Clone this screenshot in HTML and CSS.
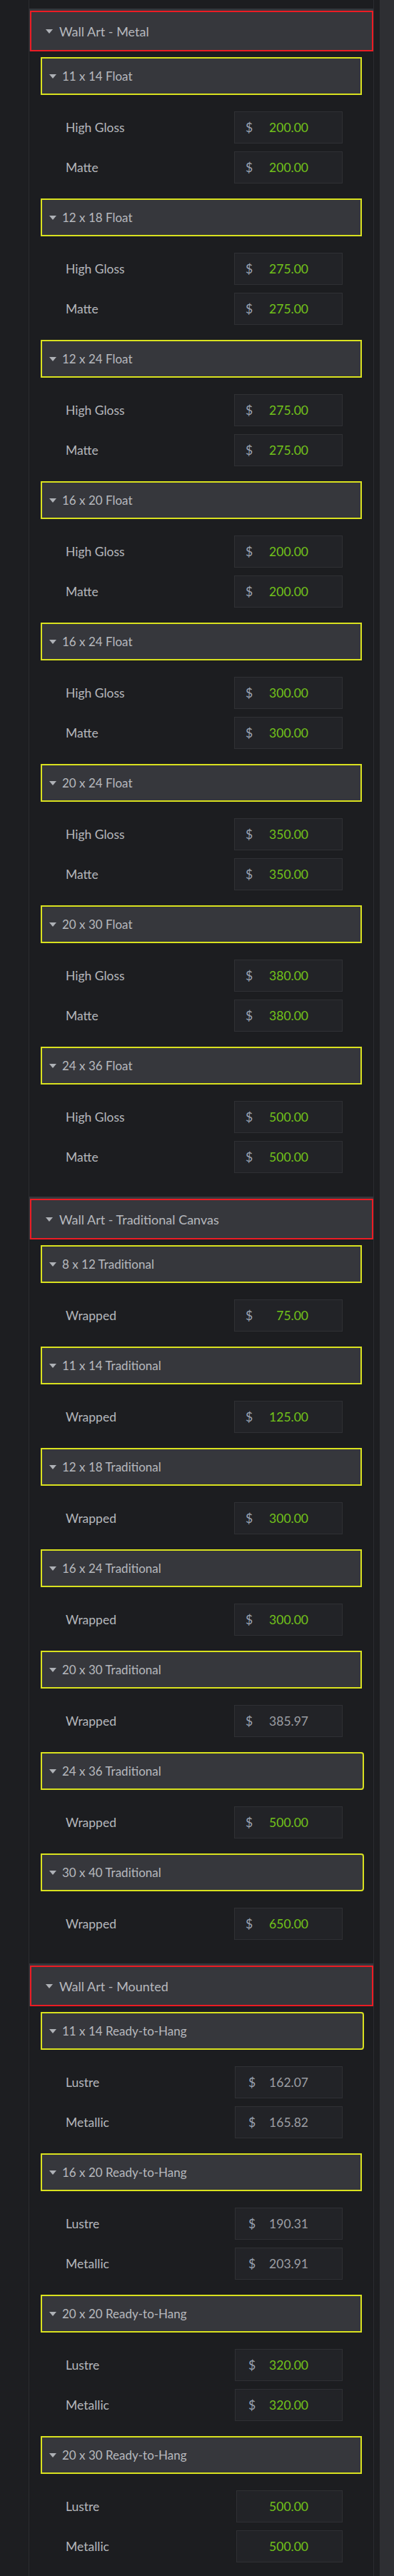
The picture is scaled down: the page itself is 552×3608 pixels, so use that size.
FILE: index.html
```html
<!DOCTYPE html>
<html lang="en">
<head>
<meta charset="utf-8">
<title>Wall Art Pricing</title>
<link rel="stylesheet" href="styles.css">
</head>
<body>
<div class="page">
  <div class="gutter"></div>
  <main class="panel">

    <section class="section">
      <div class="sec-head"><div class="sec-box"><span class="tri"></span><span>Wall Art - Metal</span></div></div>
      <div class="sec-body">
        <div class="group">
          <div class="sub"><span class="tri"></span><span>11 x 14 Float</span></div>
          <div class="rows">
            <div class="row"><span class="label">High Gloss</span><div class="field"><span class="cur">$</span><span class="val">200.00</span></div></div>
            <div class="row"><span class="label">Matte</span><div class="field"><span class="cur">$</span><span class="val">200.00</span></div></div>
          </div>
        </div>
        <div class="group">
          <div class="sub"><span class="tri"></span><span>12 x 18 Float</span></div>
          <div class="rows">
            <div class="row"><span class="label">High Gloss</span><div class="field"><span class="cur">$</span><span class="val">275.00</span></div></div>
            <div class="row"><span class="label">Matte</span><div class="field"><span class="cur">$</span><span class="val">275.00</span></div></div>
          </div>
        </div>
        <div class="group">
          <div class="sub"><span class="tri"></span><span>12 x 24 Float</span></div>
          <div class="rows">
            <div class="row"><span class="label">High Gloss</span><div class="field"><span class="cur">$</span><span class="val">275.00</span></div></div>
            <div class="row"><span class="label">Matte</span><div class="field"><span class="cur">$</span><span class="val">275.00</span></div></div>
          </div>
        </div>
        <div class="group">
          <div class="sub"><span class="tri"></span><span>16 x 20 Float</span></div>
          <div class="rows">
            <div class="row"><span class="label">High Gloss</span><div class="field"><span class="cur">$</span><span class="val">200.00</span></div></div>
            <div class="row"><span class="label">Matte</span><div class="field"><span class="cur">$</span><span class="val">200.00</span></div></div>
          </div>
        </div>
        <div class="group">
          <div class="sub"><span class="tri"></span><span>16 x 24 Float</span></div>
          <div class="rows">
            <div class="row"><span class="label">High Gloss</span><div class="field"><span class="cur">$</span><span class="val">300.00</span></div></div>
            <div class="row"><span class="label">Matte</span><div class="field"><span class="cur">$</span><span class="val">300.00</span></div></div>
          </div>
        </div>
        <div class="group">
          <div class="sub"><span class="tri"></span><span>20 x 24 Float</span></div>
          <div class="rows">
            <div class="row"><span class="label">High Gloss</span><div class="field"><span class="cur">$</span><span class="val">350.00</span></div></div>
            <div class="row"><span class="label">Matte</span><div class="field"><span class="cur">$</span><span class="val">350.00</span></div></div>
          </div>
        </div>
        <div class="group">
          <div class="sub"><span class="tri"></span><span>20 x 30 Float</span></div>
          <div class="rows">
            <div class="row"><span class="label">High Gloss</span><div class="field"><span class="cur">$</span><span class="val">380.00</span></div></div>
            <div class="row"><span class="label">Matte</span><div class="field"><span class="cur">$</span><span class="val">380.00</span></div></div>
          </div>
        </div>
        <div class="group">
          <div class="sub"><span class="tri"></span><span>24 x 36 Float</span></div>
          <div class="rows">
            <div class="row"><span class="label">High Gloss</span><div class="field"><span class="cur">$</span><span class="val">500.00</span></div></div>
            <div class="row"><span class="label">Matte</span><div class="field"><span class="cur">$</span><span class="val">500.00</span></div></div>
          </div>
        </div>
      </div>
    </section>

    <section class="section">
      <div class="sec-head"><div class="sec-box"><span class="tri"></span><span>Wall Art - Traditional Canvas</span></div></div>
      <div class="sec-body">
        <div class="group">
          <div class="sub"><span class="tri"></span><span>8 x 12 Traditional</span></div>
          <div class="rows">
            <div class="row"><span class="label">Wrapped</span><div class="field"><span class="cur">$</span><span class="val">75.00</span></div></div>
          </div>
        </div>
        <div class="group">
          <div class="sub"><span class="tri"></span><span>11 x 14 Traditional</span></div>
          <div class="rows">
            <div class="row"><span class="label">Wrapped</span><div class="field"><span class="cur">$</span><span class="val">125.00</span></div></div>
          </div>
        </div>
        <div class="group">
          <div class="sub"><span class="tri"></span><span>12 x 18 Traditional</span></div>
          <div class="rows">
            <div class="row"><span class="label">Wrapped</span><div class="field"><span class="cur">$</span><span class="val">300.00</span></div></div>
          </div>
        </div>
        <div class="group">
          <div class="sub"><span class="tri"></span><span>16 x 24 Traditional</span></div>
          <div class="rows">
            <div class="row"><span class="label">Wrapped</span><div class="field"><span class="cur">$</span><span class="val">300.00</span></div></div>
          </div>
        </div>
        <div class="group">
          <div class="sub"><span class="tri"></span><span>20 x 30 Traditional</span></div>
          <div class="rows">
            <div class="row"><span class="label">Wrapped</span><div class="field"><span class="cur">$</span><span class="val muted">385.97</span></div></div>
          </div>
        </div>
        <div class="group">
          <div class="sub wide"><span class="tri"></span><span>24 x 36 Traditional</span></div>
          <div class="rows">
            <div class="row"><span class="label">Wrapped</span><div class="field"><span class="cur">$</span><span class="val">500.00</span></div></div>
          </div>
        </div>
        <div class="group">
          <div class="sub wide"><span class="tri"></span><span>30 x 40 Traditional</span></div>
          <div class="rows">
            <div class="row"><span class="label">Wrapped</span><div class="field"><span class="cur">$</span><span class="val">650.00</span></div></div>
          </div>
        </div>
      </div>
    </section>

    <section class="section">
      <div class="sec-head"><div class="sec-box"><span class="tri"></span><span>Wall Art - Mounted</span></div></div>
      <div class="sec-body">
        <div class="group">
          <div class="sub wide"><span class="tri"></span><span>11 x 14 Ready-to-Hang</span></div>
          <div class="rows">
            <div class="row"><span class="label">Lustre</span><div class="field alt"><span class="cur">$</span><span class="val muted">162.07</span></div></div>
            <div class="row"><span class="label">Metallic</span><div class="field alt"><span class="cur">$</span><span class="val muted">165.82</span></div></div>
          </div>
        </div>
        <div class="group">
          <div class="sub"><span class="tri"></span><span>16 x 20 Ready-to-Hang</span></div>
          <div class="rows">
            <div class="row"><span class="label">Lustre</span><div class="field alt"><span class="cur">$</span><span class="val muted">190.31</span></div></div>
            <div class="row"><span class="label">Metallic</span><div class="field alt"><span class="cur">$</span><span class="val muted">203.91</span></div></div>
          </div>
        </div>
        <div class="group">
          <div class="sub"><span class="tri"></span><span>20 x 20 Ready-to-Hang</span></div>
          <div class="rows">
            <div class="row"><span class="label">Lustre</span><div class="field alt"><span class="cur">$</span><span class="val">320.00</span></div></div>
            <div class="row"><span class="label">Metallic</span><div class="field alt"><span class="cur">$</span><span class="val">320.00</span></div></div>
          </div>
        </div>
        <div class="group">
          <div class="sub"><span class="tri"></span><span>20 x 30 Ready-to-Hang</span></div>
          <div class="rows">
            <div class="row"><span class="label">Lustre</span><div class="field bare"><span class="val">500.00</span></div></div>
            <div class="row"><span class="label">Metallic</span><div class="field bare"><span class="val">500.00</span></div></div>
          </div>
        </div>
      </div>
    </section>

  </main>
  <div class="edge"></div>
  <div class="scroll"></div>
</div>
</body>
</html>
```

FILE: styles.css
```css
html, body {
  margin: 0;
  padding: 0;
  background: #1d1e21;
}

body {
  font-family: Lato, "Liberation Sans", Arial, sans-serif;
  -webkit-font-smoothing: antialiased;
}

.page {
  display: grid;
  grid-template-columns: 40px 484px 8px 20px;
  min-height: 100vh;
}

.gutter,
.edge {
  background: #1d1e21;
}

.scroll {
  background: #2e2f33;
}

.panel {
  background: #1c1d20;
  border-left: 1px solid #2b2c30;
  border-right: 1px solid #2b2c30;
  padding-top: 12px;
}

.section + .section {
  margin-top: 12px;
}

.sec-head {
  background: #36373c;
  padding: 3px 0 0 1px;
}

.sec-box {
  box-sizing: border-box;
  height: 57px;
  border: 2px solid #ec1c24;
  display: flex;
  align-items: center;
  gap: 9px;
  padding-left: 20px;
  color: #b6b9be;
  font-size: 18px;
}

.tri {
  display: inline-block;
  width: 0;
  height: 0;
  border-left: 5.5px solid transparent;
  border-right: 5.5px solid transparent;
  border-top: 6px solid #aeb1b6;
}

.sec-body {
  padding-top: 8px;
}

.group {
  margin: 0 16px;
}

.sub {
  box-sizing: border-box;
  height: 53px;
  border: 2px solid #d9e11f;
  background: #36373c;
  display: flex;
  align-items: center;
  gap: 8px;
  padding-left: 10px;
  color: #b6b9be;
  font-size: 17px;
}

.sub.wide {
  margin-right: -3px;
  border-radius: 0 4px 4px 0;
}

.rows {
  display: flex;
  flex-direction: column;
  gap: 11px;
  padding: 23px 27px 21px 35px;
}

.row {
  display: flex;
  align-items: center;
  justify-content: space-between;
  height: 45px;
}

.label {
  color: #b5b7bc;
  font-size: 17.5px;
}

.field {
  box-sizing: border-box;
  width: 152px;
  height: 45px;
  border: 1px solid #2f3034;
  background: #222327;
  display: flex;
  align-items: center;
  padding: 0 47px 0 15px;
}

.field.alt {
  width: 151px;
  padding-left: 18px;
}

.field.bare {
  width: 149px;
}

.cur {
  color: #9ba3b4;
  font-size: 17.5px;
}

.val {
  flex: 1;
  text-align: right;
  color: #72c21a;
  font-size: 17.5px;
}

.val.muted {
  color: #9c9ea3;
}
```
